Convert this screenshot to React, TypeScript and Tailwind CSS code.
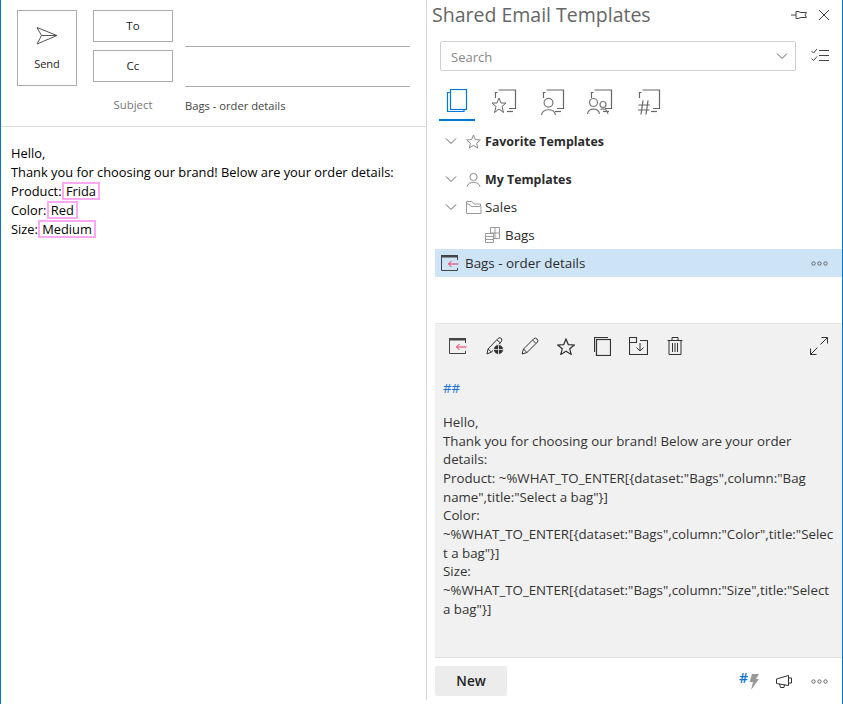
import React from "react";

const ui = { fontFamily: '"Open Sans", "Noto Sans", sans-serif' };

const Svg = ({ w, h, children, className }: { w: number; h: number; children: React.ReactNode; className?: string }) => (
  <svg width={w} height={h} viewBox={`0 0 ${w} ${h}`} fill="none" stroke="currentColor" strokeWidth="1" className={className}>
    {children}
  </svg>
);

const Chevron = () => (
  <Svg w={12} h={8} className="text-[#666]">
    <path d="M1 1.5 L6 6.5 L11 1.5" />
  </Svg>
);

// document stack icons for the tab row
const TabStack = ({ children }: { children?: React.ReactNode }) => (
  <Svg w={30} h={27} className="text-[#666]">
    <path d="M7.5 1 H24.5 V19.5 H18" strokeWidth="1.2" />
    <path d="M4.5 9 V3.5 H6.5" strokeWidth="1.2" />
    <path d="M16 22.5 H22" strokeWidth="1.2" />
    {children}
  </Svg>
);

const RedWindow = () => (
  <Svg w={18} h={16}>
    <rect x="0.5" y="0.5" width="16" height="1.5" fill="#444" stroke="#444" />
    <path d="M0.5 2 V15.5 H16.5 V13 M16.5 2 V5" stroke="#444" />
    <path d="M17.5 9 H7.5 M10.5 6 L7.5 9 L10.5 12" stroke="#f0325a" />
  </Svg>
);

const Dots = () => (
  <Svg w={17} h={5} className="text-[#666]">
    <circle cx="2.5" cy="2.5" r="1.7" />
    <circle cx="8.5" cy="2.5" r="1.7" />
    <circle cx="14.5" cy="2.5" r="1.7" />
  </Svg>
);

const Highlight = ({ children }: { children: React.ReactNode }) => (
  <span className="inline-block border-2 border-[#ffa8f5] h-[18px] leading-[14px] px-[2px] -ml-[3px]">{children}</span>
);

export default function App() {
  return (
    <div style={ui} className="flex w-[843px] h-[704px] bg-white border-x border-x-[#0a74c9] text-[#222] overflow-hidden">
      {/* compose side */}
      <div className="w-[426px] h-[700px] shrink-0 border-r border-r-[#d6d6d6]">
        <div className="h-[127px] border-b border-b-[#dcdcdc] flex pl-4 pt-[10px] pr-[16px]">
          <div className="w-[60px] h-[76px] border border-[#ababab] flex flex-col items-center pt-[15px]">
            <Svg w={22} h={20} className="text-[#555]">
              <path d="M1 1.5 L21 9.5 L1 18 L5.5 9.5 Z M5.5 9.5 H21" />
            </Svg>
            <span className="text-[11px] mt-[10px] leading-4">Send</span>
          </div>
          <div className="ml-4 flex flex-col gap-2 w-20">
            <div className="h-8 border border-[#ababab] flex items-center justify-center text-[11.5px]">To</div>
            <div className="h-8 border border-[#ababab] flex items-center justify-center text-[11.5px]">Cc</div>
            <div className="mt-[7px] text-center text-[11.4px] text-[#777] leading-4">Subject</div>
          </div>
          <div className="ml-3 flex-1">
            <div className="h-[37px] border-b border-b-[#ababab]"></div>
            <div className="h-10 border-b border-b-[#ababab]"></div>
            <div className="mt-[11px] text-[11.2px] leading-4 text-[#444]">Bags - order details</div>
          </div>
        </div>
        <div className="pl-[10px] pt-[17px] text-[12.85px] leading-[19px] text-black">
          <div>Hello,</div>
          <div>Thank you for choosing our brand! Below are your order details:</div>
          <div>Product: <Highlight>Frida</Highlight></div>
          <div>Color: <Highlight>Red</Highlight></div>
          <div>Size: <Highlight>Medium</Highlight></div>
        </div>
      </div>

      {/* add-in pane */}
      <div className="flex-1 min-w-0 flex flex-col">
        <div className="h-[31px] flex items-center pl-[5px] pr-[12px] pb-[2px]">
          <span className="text-[19.5px] text-[#666] leading-[28px]">Shared Email Templates</span>
          <div className="ml-auto flex items-center gap-[10px] text-[#444]">
            <Svg w={18} h={12}>
              <path d="M1 6 H6 M6 2.5 H8 L11 3.5 H16.5 L15 6 L16.5 8.5 H11 L8 9.5 H6 Z" />
            </Svg>
            <Svg w={12} h={12}>
              <path d="M1 1 L11 11 M11 1 L1 11" />
            </Svg>
          </div>
        </div>

        <div className="mt-[10px] h-[30px] flex items-center pl-[13px]">
          <div className="w-[356px] h-[30px] border border-[#cfcfcf] rounded-[2px] flex items-center justify-between pl-[10px] pr-[7px]">
            <span className="text-[13px] text-[#888] mt-[3px]">Search</span>
            <Chevron />
          </div>
          <Svg w={18} h={16} className="text-[#444] ml-[15px]">
            <path d="M0.5 3 L2.5 5 L6 1 M0.5 10.5 L2.5 12.5 L6 8.5" />
            <path d="M8 2.5 H18 M8 7.5 H18 M8 12.5 H18" />
          </Svg>
        </div>

        {/* tabs */}
        <div className="mt-[18px] h-[32px] flex pl-3">
          <div className="w-9 h-[32px] border-b-[2px] border-b-[#0078d4] flex justify-center">
            <Svg w={22} h={26} className="text-[#0078d4]">
              <rect x="4.5" y="0.5" width="16" height="20" strokeWidth="1.2" />
              <path d="M4.5 3.5 H1.5 V22.5 H18 V20.5" strokeWidth="1.2" />
            </Svg>
          </div>
          <div className="ml-4">
            <TabStack>
              <path d="M8 9 L10 14 L15 14 L11 17.5 L12.5 23.5 L8 20 L3.5 23.5 L5 17.5 L1 14 L6 14 Z" fill="#fff" stroke="#666" />
            </TabStack>
          </div>
          <div className="ml-[18px]">
            <TabStack>
              <circle cx="9.5" cy="13.8" r="4.4" fill="#fff" stroke="#777" strokeWidth="1.2" />
              <path d="M2.5 26 C3.5 19 15.5 19 16.5 26" stroke="#777" strokeWidth="1.2" />
            </TabStack>
          </div>
          <div className="ml-[18px]">
            <TabStack>
              <circle cx="6.5" cy="13.5" r="4" fill="#fff" stroke="#777" strokeWidth="1.2" />
              <path d="M0.5 25 C1.5 18.5 11.5 18.5 12.5 25" stroke="#777" strokeWidth="1.2" />
              <circle cx="16" cy="15.5" r="3" fill="#fff" stroke="#777" strokeWidth="1.2" />
              <path d="M13.5 20.5 C16.5 19 20 20 21 25" stroke="#777" strokeWidth="1.2" />
            </TabStack>
          </div>
          <div className="ml-[18px]">
            <TabStack>
              <path d="M8 11.5 L6 25.5 M13 11.5 L11 25.5 M3.5 16 H15 M3 21 H14.5" stroke="#666" strokeWidth="1.2" />
            </TabStack>
          </div>
        </div>

        {/* tree */}
        <div className="text-[13.4px] text-[#2b2b2b]">
          <div className="mt-[6px] h-7 flex items-center pl-[18px] gap-[10px]">
            <Chevron />
            <Svg w={15} h={15} className="text-[#8a8a8a] -ml-[1px]">
              <path d="M7.5 1 L9.4 5.6 L14.3 6 L10.6 9.2 L11.7 14 L7.5 11.4 L3.3 14 L4.4 9.2 L0.7 6 L5.6 5.6 Z" />
            </Svg>
            <span className="text-[12.4px] font-bold -ml-[6px] mt-[2px]">Favorite Templates</span>
          </div>
          <div className="mt-[10px] h-7 flex items-center pl-[18px] gap-[10px]">
            <Chevron />
            <Svg w={15} h={15} className="text-[#8a8a8a] -ml-[1px]">
              <circle cx="7.5" cy="5" r="3.6" />
              <path d="M1 14.5 C2 9 13 9 14 14.5" />
            </Svg>
            <span className="text-[12.4px] font-bold -ml-[6px] mt-[2px]">My Templates</span>
          </div>
          <div className="h-7 flex items-center pl-[18px] gap-[10px]">
            <Chevron />
            <Svg w={16} h={13} className="text-[#999] -ml-[1px]">
              <path d="M0.5 12.5 V0.5 H6 L8 3 H14.5 V5 M0.5 12.5 H15 V5.5 H5 L3 3 H0.5" />
            </Svg>
            <span className="-ml-[7px]">Sales</span>
          </div>
          <div className="h-7 flex items-center pl-[58px]">
            <Svg w={15} h={16} className="text-[#999]">
              <path d="M5.5 0.5 H14.5 V11.5 H9 M5.5 0.5 V6 M10 0.5 V11.5 M5.5 6 H14.5" />
              <path d="M0.5 6.5 H8.5 V15.5 H0.5 Z M0.5 9.5 H8.5 M0.5 12.5 H8.5" />
            </Svg>
            <span className="ml-[5px]">Bags</span>
          </div>
          <div className="ml-2 h-7 bg-[#cde4f7] flex items-center pl-[6px] pr-[14px]">
            <RedWindow />
            <span className="ml-[6px]">Bags - order details</span>
            <div className="ml-auto flex"><Dots /></div>
          </div>
        </div>

        {/* preview */}
        <div className="ml-2 mt-[46px] h-[335px] bg-[#f1f1f1] border-t border-t-[#e4e4e4] border-b border-b-[#e0e0e0]">
          <div className="h-[46px] flex items-center pl-[14px] pr-[14px] pb-[2px] text-[#333]">
            <RedWindow />
            <Svg w={20} h={20} className="ml-[18px]">
              <path d="M2 18 L3 13 L13 2.5 Q15 1 16.5 2.5 Q17.5 4 16 6 L6.5 16 Z M3 13 L6.5 16 M12 4 L15.5 7" />
              <circle cx="13.5" cy="13.5" r="5" fill="#333" stroke="#f1f1f1" />
              <path d="M9 13.5 H18 M13.5 9 V18" stroke="#f1f1f1" strokeWidth="0.8" />
            </Svg>
            <Svg w={18} h={18} className="ml-[16px]">
              <path d="M1 17 L2.5 12 L13 1.5 Q14.5 0.5 16 2 Q17.5 3.5 16.5 5 L6 15.5 Z M2.5 12 L6 15.5 M11.5 3 L15 6.5" />
            </Svg>
            <Svg w={18} h={17} className="ml-[18px]">
              <path d="M9 1 L11.3 6.6 L17.3 7 L12.7 10.8 L14.2 16.4 L9 13.3 L3.8 16.4 L5.3 10.8 L0.7 7 L6.7 6.6 Z" strokeWidth="1.2" />
            </Svg>
            <Svg w={17} h={19} className="ml-[19px]">
              <rect x="2.5" y="2.5" width="14" height="16" strokeWidth="1.2" />
              <path d="M0.5 15 V0.5 H14" strokeWidth="1.2" />
            </Svg>
            <Svg w={19} h={18} className="ml-[18px]">
              <path d="M11 3.5 H18.5 V17.5 H0.5 V0.5 H7.5 V5.5 H0.5" strokeWidth="1.1" />
              <path d="M11 6 V14 M7.5 10.5 L11 14 L14.5 10.5" />
            </Svg>
            <Svg w={16} h={18} className="ml-[19px]">
              <path d="M0.5 3.5 H15.5 M5 3.5 V0.5 H11 V3.5 M2 3.5 V17.5 H14 V3.5 M5.5 6 V15 M8 6 V15 M10.5 6 V15" />
            </Svg>
            <Svg w={18} h={18} className="ml-auto">
              <path d="M10.5 7.5 L17.5 0.5 M11.5 0.5 H17.5 V6.5 M7.5 10.5 L0.5 17.5 M0.5 11.5 V17.5 H6.5" />
            </Svg>
          </div>
          <div className="pl-2 pt-[9px] text-[13.3px] leading-[18.65px] text-[#333]">
            <div className="text-[#1a73d0]">##</div>
            <div className="h-[15.5px]"></div>
            <div>Hello,</div>
            <div>Thank you for choosing our brand! Below are your order</div>
            <div>details:</div>
            <div className="whitespace-nowrap">Product: ~%WHAT_TO_ENTER[{'{'}dataset:"Bags",column:"Bag</div>
            <div>name",title:"Select a bag"{'}'}]</div>
            <div>Color:</div>
            <div className="whitespace-nowrap">~%WHAT_TO_ENTER[{'{'}dataset:"Bags",column:"Color",title:"Selec</div>
            <div>t a bag"{'}'}]</div>
            <div>Size:</div>
            <div className="whitespace-nowrap">~%WHAT_TO_ENTER[{'{'}dataset:"Bags",column:"Size",title:"Select</div>
            <div>a bag"{'}'}]</div>
          </div>
        </div>

        {/* footer */}
        <div className="ml-2 mt-2 h-[30px] flex items-center pr-[14px]">
          <div className="w-[72px] h-[30px] bg-[#ececec] rounded-[2px] flex items-center justify-center text-[13.5px] font-semibold text-[#222]">New</div>
          <span className="ml-auto text-[14px] font-semibold text-[#0a74d0] leading-4 -mt-[6px]">#</span>
          <Svg w={11} h={16} className="text-[#999] mt-[2px]">
            <path d="M4 0 H11 L8 5 H11 L3 16 L5 8 H1.5 Z" fill="#999" stroke="none" />
          </Svg>
          <Svg w={17} h={13} className="text-[#333] ml-[17px]">
            <path d="M0.5 4 L12.5 0.5 V10.5 L0.5 8.5 Z M12.5 3 H15.5 V8 H12.5 M3.5 9 L4.5 12.5 H8 L8.5 9.8" />
          </Svg>
          <div className="ml-[18px] flex"><Dots /></div>
        </div>
      </div>
    </div>
  );
}
